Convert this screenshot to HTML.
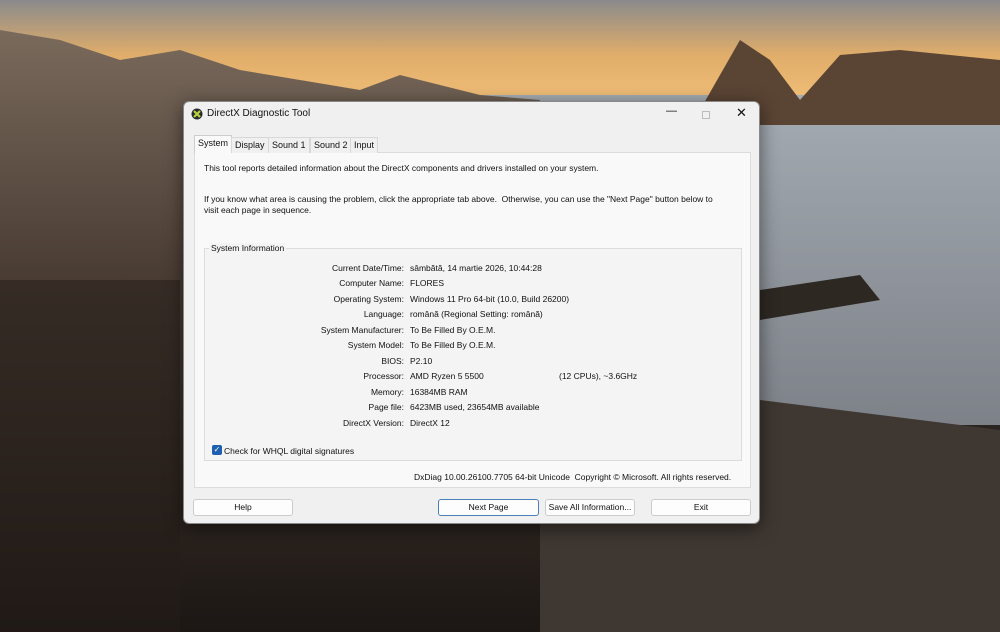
<!DOCTYPE html>
<html><head><meta charset="utf-8"><style>
*{margin:0;padding:0;box-sizing:border-box}
body{width:1000px;height:632px;overflow:hidden;position:relative;font-family:"Liberation Sans",sans-serif;font-size:8.5px;color:#111;
background:#2a2520}
.bg{position:absolute;inset:0}
.dlg{position:absolute;left:183px;top:101px;width:577px;height:423px;background:#f0f0f0;border:1px solid #888;border-radius:6px;box-shadow:0 4px 18px rgba(0,0,0,.5)}
.t{position:absolute;white-space:nowrap}
.panel{position:absolute;left:10px;top:50px;width:557px;height:336px;background:#f9f9f9;border:1px solid #dcdcdc}
.tab{position:absolute;top:35px;height:16px;border:1px solid #d8d8d8;border-bottom:none;background:#f0f0f0;padding:2px 3px;font-size:9px}
.grp{position:absolute;left:20px;top:146px;width:538px;height:213px;border:1px solid #dcdcdc;background:#f4f4f4}
.lbl{position:absolute;right:355px;white-space:nowrap}
.val{position:absolute;left:226px;white-space:nowrap}
.btn{position:absolute;top:397px;height:17px;background:#fdfdfd;border:1px solid #ccc;border-radius:3px;text-align:center;line-height:15px;font-size:8.5px}
</style></head><body>
<svg class="bg" width="1000" height="632">
<defs>
<linearGradient id="sky" x1="0" y1="0" x2="0" y2="1"><stop offset="0" stop-color="#8a8a8c"/><stop offset=".5" stop-color="#e0ad6a"/><stop offset="1" stop-color="#f4c27a"/></linearGradient>
<linearGradient id="sea" x1="0" y1="0" x2="0" y2="1"><stop offset="0" stop-color="#a4abb2"/><stop offset="1" stop-color="#7d8188"/></linearGradient>
<linearGradient id="rock" x1="0" y1="0" x2="0" y2="1"><stop offset="0" stop-color="#7a6a5c"/><stop offset=".4" stop-color="#4a3d34"/><stop offset="1" stop-color="#1c1714"/></linearGradient>
</defs>
<rect width="1000" height="110" fill="url(#sky)"/>
<rect x="0" y="95" width="1000" height="330" fill="url(#sea)"/>
<path d="M700 110 L740 40 L770 60 L800 100 L840 55 L900 50 L1000 60 L1000 125 L700 125Z" fill="#5a4434"/>
<path d="M0 30 L60 40 L120 60 L180 50 L240 70 L300 80 L360 90 L400 75 L480 95 L540 100 L540 632 L0 632Z" fill="url(#rock)"/>
<path d="M760 400 L1000 430 L1000 632 L540 632 L540 520 L760 500Z" fill="#3e3732"/>
<path d="M760 290 L860 275 L880 300 L760 320Z" fill="#2e2823"/>
<rect x="0" y="280" width="180" height="352" fill="#231c18" opacity=".5"/>
</svg>
<div class="dlg">
<svg style="position:absolute;left:7px;top:6px" width="12" height="12"><circle cx="6" cy="6" r="5.5" fill="#2a2a30"/><path d="M3 3L9 9M9 3L3 9" stroke="#b6d43a" stroke-width="2.2"/></svg>
<div class="t" style="left:23px;top:6px;font-size:10px">DirectX Diagnostic Tool</div>
<div class="t" style="left:482px;top:3px;font-size:11px">—</div>
<div class="t" style="left:518px;top:9px;width:8px;height:8px;border:1px solid #bbb"></div>
<div class="t" style="left:552px;top:3px;font-size:13px">✕</div>
<div class="panel"></div>
<div class="tab" style="left:10px;top:33px;height:18px;background:#f9f9f9;border-color:#ccc">System</div>
<div class="tab" style="left:47px">Display</div>
<div class="tab" style="left:84px">Sound 1</div>
<div class="tab" style="left:126px">Sound 2</div>
<div class="tab" style="left:166px">Input</div>
<div class="t" style="left:20px;top:61px">This tool reports detailed information about the DirectX components and drivers installed on your system.</div>
<div class="t" style="left:20px;top:92px;line-height:11px">If you know what area is causing the problem, click the appropriate tab above.&nbsp; Otherwise, you can use the "Next Page" button below to<br>visit each page in sequence.</div>
<div class="grp"></div>
<div class="t" style="left:25px;top:141px;background:#f4f4f4;padding:0 2px">System Information</div>
<div class="lbl" style="top:161px">Current Date/Time:</div><div class="val" style="top:161px">sâmbătă, 14 martie 2026, 10:44:28</div>
<div class="lbl" style="top:176px">Computer Name:</div><div class="val" style="top:176px">FLORES</div>
<div class="lbl" style="top:192px">Operating System:</div><div class="val" style="top:192px">Windows 11 Pro 64-bit (10.0, Build 26200)</div>
<div class="lbl" style="top:207px">Language:</div><div class="val" style="top:207px">română (Regional Setting: română)</div>
<div class="lbl" style="top:223px">System Manufacturer:</div><div class="val" style="top:223px">To Be Filled By O.E.M.</div>
<div class="lbl" style="top:238px">System Model:</div><div class="val" style="top:238px">To Be Filled By O.E.M.</div>
<div class="lbl" style="top:254px">BIOS:</div><div class="val" style="top:254px">P2.10</div>
<div class="lbl" style="top:269px">Processor:</div><div class="val" style="top:269px">AMD Ryzen 5 5500</div><div class="t" style="left:375px;top:269px">(12 CPUs), ~3.6GHz</div>
<div class="lbl" style="top:285px">Memory:</div><div class="val" style="top:285px">16384MB RAM</div>
<div class="lbl" style="top:300px">Page file:</div><div class="val" style="top:300px">6423MB used, 23654MB available</div>
<div class="lbl" style="top:316px">DirectX Version:</div><div class="val" style="top:316px">DirectX 12</div>
<div class="t" style="left:28px;top:343px;width:10px;height:10px;background:#1f5fb0;border-radius:2px;color:#fff;font-size:8px;line-height:10px;text-align:center">✓</div>
<div class="t" style="left:40px;top:344px">Check for WHQL digital signatures</div>
<div class="t" style="left:230px;top:370px">DxDiag 10.00.26100.7705 64-bit Unicode&nbsp; Copyright © Microsoft. All rights reserved.</div>
<div class="btn" style="left:9px;width:100px">Help</div>
<div class="btn" style="left:254px;width:101px;border-color:#4a7fb8">Next Page</div>
<div class="btn" style="left:361px;width:90px">Save All Information...</div>
<div class="btn" style="left:467px;width:100px">Exit</div>
</div>
</body></html>
